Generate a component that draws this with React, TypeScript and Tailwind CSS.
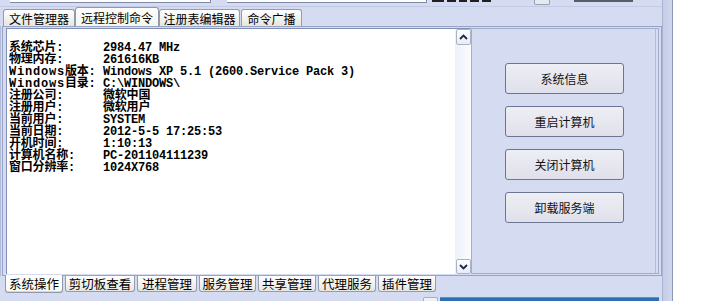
import React from "react";

const rows: [React.ReactNode, string][] = [
  ["系统芯片:", "2984.47 MHz"],
  ["物理内存:", "261616KB"],
  [<><span className="tracking-[0.8px]">Windows</span>版本:</>, "Windows XP 5.1 (2600.Service Pack 3)"],
  [<><span className="tracking-[0.8px]">Windows</span>目录:</>, "C:\\WINDOWS\\"],
  ["注册公司:", "微软中国"],
  ["注册用户:", "微软用户"],
  ["当前用户:", "SYSTEM"],
  ["当前日期:", "2012-5-5 17:25:53"],
  ["开机时间:", "1:10:13"],
  ["计算机名称:", "PC-201104111239"],
  ["窗口分辨率:", "1024X768"],
];

const topTabs = [
  { label: "文件管理器", w: 72 },
  { label: "远程控制命令", w: 84, sel: true },
  { label: "注册表编辑器", w: 81 },
  { label: "命令广播", w: 61 },
];

const bottomTabs = [
  { label: "系统操作", w: 58, sel: true },
  { label: "剪切板查看", w: 70 },
  { label: "进程管理", w: 60 },
  { label: "服务管理", w: 57 },
  { label: "共享管理", w: 58 },
  { label: "代理服务", w: 58 },
  { label: "插件管理", w: 58 },
];

const buttons = ["系统信息", "重启计算机", "关闭计算机", "卸载服务端"];

function Chevron({ up }: { up?: boolean }) {
  return (
    <svg width="9" height="6" viewBox="0 0 9 6">
      <path
        d={up ? "M1 5 L4.5 1.5 L8 5" : "M1 1 L4.5 4.5 L8 1"}
        fill="none"
        stroke="#1b2a4a"
        strokeWidth="1.8"
      />
    </svg>
  );
}

export default function App() {
  return (
    <div className="w-[702px] h-[301px] bg-white flex overflow-hidden font-['Noto_Sans_CJK_SC',sans-serif] text-black">
      <div className="w-[673px] h-full flex bg-[#d5dcf1] border-r border-[#8c96b6]">
        {/* main column */}
        <div className="w-[662px] h-full flex flex-col">
          {/* top cut-off strip */}
          <div className="h-[7px] flex relative border-b border-[#c3cbe4]">
            <div className="ml-[10px] w-[201px] h-[3px] bg-white border-b border-r border-[#7f8aa8]" />
            <div className="ml-[16px] w-[200px] h-[3px] bg-white border-b border-r border-[#7f8aa8]" />
            <div className="ml-[5px] w-[12px] h-[2px] bg-[#202020]" />
            <div className="ml-[3px] w-[52px] h-[2px] flex gap-[3px]">
              <div className="w-[9px] h-[2px] bg-[#202020]" />
              <div className="w-[8px] h-[2px] bg-[#202020]" />
              <div className="w-[9px] h-[2px] bg-[#202020]" />
              <div className="w-[9px] h-[2px] bg-[#202020]" />
            </div>
            <div className="ml-[35px] w-[16px] h-[5px] bg-[#e6e8f2] border-b border-x border-[#9aa0b4] rounded-b-[2px]" />
            <div className="ml-[24px] w-[59px] h-[2px] bg-[#585c66]" />
          </div>
          {/* top tabs */}
          <div className="h-[19px] flex items-end pl-[3px] gap-[1px]">
            {topTabs.map((t) => (
              <div
                key={t.label}
                style={{ width: t.w }}
                className={
                  t.sel
                    ? "h-[19px] -mx-[1px] relative z-10 border border-b-0 border-[#8f99ab] rounded-t-[3px] bg-gradient-to-b from-white to-[#f3f6ec] text-[12px] leading-[19px] text-center"
                    : "h-[17px] border border-b-0 border-[#939cae] rounded-t-[3px] bg-gradient-to-b from-white to-[#e6e6e0] text-[12px] leading-[17px] text-center"
                }
              >
                {t.label}
              </div>
            ))}
          </div>
          {/* page */}
          <div className="h-[250px] flex">
            <div className="w-[2px] border-l border-[#b3bcd9]" />
            <div className="w-[660px] border border-[#98a3c6] flex pt-[1px] pl-[3px] pr-[2px] pb-[1px]">
              {/* text box */}
              <div className="w-[449px] h-full bg-white border-l border-t border-[#7f8fb5] pt-[13px] pl-[2px]">
                <div className="grid grid-cols-[94px_1fr] auto-rows-[12px] font-['Liberation_Mono','Noto_Sans_CJK_SC',monospace] font-bold text-[12px] tracking-[-0.2px] leading-[12px] whitespace-pre">
                  {rows.map(([l, v], i) => (
                    <React.Fragment key={i}>
                      <div className="h-[12px]">{l}</div>
                      <div className="h-[12px]">{v}</div>
                    </React.Fragment>
                  ))}
                </div>
              </div>
              {/* scrollbar */}
              <div className="w-[16px] h-full flex flex-col bg-gradient-to-r from-[#eef1fb] to-[#fbfcff] border-t border-[#7f8fb5]">
                <div className="w-[15px] h-[16px] ml-[1px] flex items-center justify-center bg-gradient-to-b from-white to-[#e9ecf4] border border-[#a9b2c8] rounded-[2px]">
                  <Chevron up />
                </div>
                <div className="flex-1" />
                <div className="w-[15px] h-[15px] ml-[1px] flex items-center justify-center bg-gradient-to-b from-white to-[#e9ecf4] border border-[#a9b2c8] rounded-[2px]">
                  <Chevron />
                </div>
              </div>
              {/* right panel */}
              <div className="flex-1 h-full border border-[#a4adcb] shadow-[inset_-2px_0_0_#d5dcf1,inset_-3px_0_0_#b3bbd6] pt-[34px] pl-[33px] flex flex-col gap-[12px]">
                {buttons.map((b) => (
                  <div
                    key={b}
                    className="w-[119px] h-[31px] rounded-[3px] border border-[#6a7692] bg-gradient-to-b from-[#eeeef5] to-[#dfe0ea] text-[12px] leading-[29px] text-center text-[#111]"
                  >
                    {b}
                  </div>
                ))}
              </div>
            </div>
          </div>
          {/* bottom tabs */}
          <div className="h-[19px] flex items-start pl-[5px] gap-[2px]">
            {bottomTabs.map((t) => (
              <div
                key={t.label}
                style={{ width: t.w }}
                className={
                  t.sel
                    ? "h-[18px] -mt-[1px] border border-t-0 border-[#8f99ab] rounded-b-[3px] bg-gradient-to-b from-white to-[#f7f9f1] shadow-[inset_0_-1px_0_#cfe3b0] text-[12.5px] leading-[18px] text-center"
                    : "h-[16px] border border-t-0 border-[#939cae] rounded-b-[3px] bg-gradient-to-b from-white to-[#e6e6e0] text-[12.5px] leading-[15px] text-center"
                }
              >
                {t.label}
              </div>
            ))}
          </div>
          {/* bottom strip */}
          <div className="flex-1 flex items-end">
            <div className="ml-[423px] w-[15px] h-[4px] bg-[#eef0f6] border-t border-x border-[#a8aec0] rounded-t-[2px]" />
            <div className="ml-[2px] w-[219px] h-[4px] bg-[#2d6fb0] border-t border-[#5d8fc6]" />
          </div>
        </div>
        {/* right frame strip */}
        <div className="flex-1 h-full bg-gradient-to-r from-[#c5cde7] to-[#d0d7ee] border-l border-[#aab3d0]" />
      </div>
    </div>
  );
}
